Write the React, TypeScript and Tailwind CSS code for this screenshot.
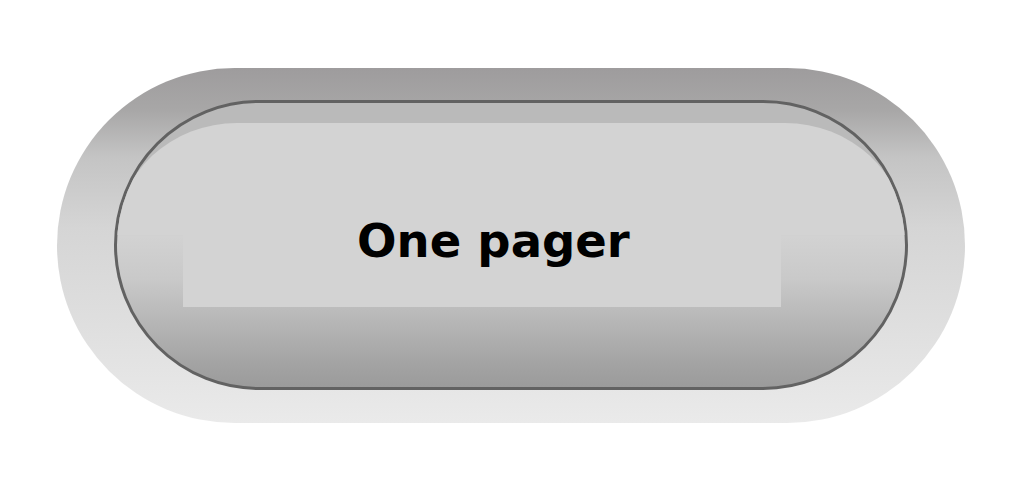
export default function App() {
  return (
    <div className="w-[1024px] h-[493px] bg-white pt-[68px] pl-[57px] font-['DejaVu_Sans',sans-serif]">
      <div className="w-[908px] h-[355px] rounded-full px-[57px] pt-[32px] pb-[33px] bg-[linear-gradient(to_bottom,#9e9c9d_0%,#a8a7a7_12%,#c4c4c4_25%,#d5d5d5_45%,#dedede_70%,#eaeaea_100%)]">
        <div className="relative w-[794px] h-[290px] rounded-full border-[3px] border-[#626262] overflow-hidden bg-[linear-gradient(to_bottom,#bababa_0%,#bababa_40%,#d2d2d2_47%,#c9c9c9_62%,#b5b5b5_78%,#a3a3a3_92%,#9b9b9b_100%)]">
          <div className="absolute left-0 right-0 top-[20px] h-[112px] bg-[#d3d3d3] rounded-tl-[120px_112px] rounded-tr-[120px_112px]" />
          <div className="absolute left-[66px] top-[130px] w-[598px] h-[74px] bg-[#d3d3d3]" />
          <div className="relative pt-[115px] pl-[240px]">
            <span className="text-[46.5px] leading-[47px] font-bold text-black whitespace-nowrap">One pager</span>
          </div>
        </div>
      </div>
    </div>
  )
}
